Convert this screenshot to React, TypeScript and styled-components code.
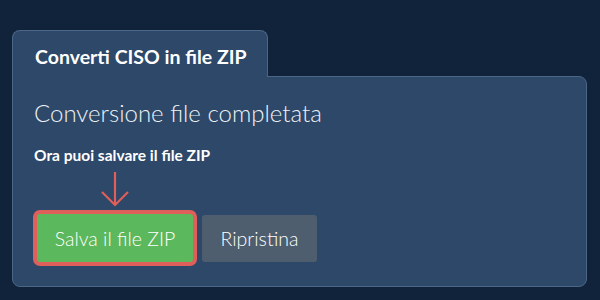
import styled, { createGlobalStyle } from "styled-components";

const GlobalStyle = createGlobalStyle`
  html, body {
    margin: 0;
    padding: 0;
    background: #11233a;
  }
  body {
    font-family: Lato, "Noto Sans", sans-serif;
    color: #ffffff;
  }
  * {
    box-sizing: border-box;
  }
`;

const Page = styled.div`
  width: 600px;
  height: 300px;
  padding: 30px 13px 0 12px;
  overflow: hidden;
`;

const Tabs = styled.div`
  display: flex;
`;

const Tab = styled.div`
  width: 256px;
  height: 47px;
  margin-bottom: -1px;
  padding: 14px 0 0 22px;
  background: #2d4868;
  border: 1px solid #4c6686;
  border-bottom: none;
  border-radius: 8px 8px 0 0;
  font-size: 19.5px;
  font-weight: 700;
  position: relative;
  z-index: 1;
`;

const Panel = styled.div`
  height: 211px;
  padding: 20px 21px 0 21px;
  background: #2d4868;
  border: 1px solid #4c6686;
  border-radius: 0 8px 8px 8px;
`;

const Heading = styled.h2`
  margin: 0;
  font-size: 24px;
  font-weight: 300;
  line-height: 32px;
  color: #eef2f6;
`;

const Hint = styled.p`
  margin: 16px 0 0 0;
  font-size: 15.5px;
  font-weight: 700;
  line-height: 20px;
`;

const Actions = styled.div`
  display: flex;
  align-items: flex-end;
  gap: 9px;
  padding-left: 3px;
`;

const Primary = styled.div`
  display: flex;
  flex-direction: column;
  align-items: center;
`;

const Arrow = styled.svg`
  display: block;
  margin: 6px 0 7px 0;
`;

const Button = styled.button<{ $variant: "save" | "reset" }>`
  font-family: inherit;
  font-size: 19.5px;
  font-weight: 300;
  color: #ffffff;
  border: none;
  border-radius: 3px;
  cursor: pointer;
  background: ${(p) => (p.$variant === "save" ? "#5cb85c" : "#4e5e6e")};
  width: ${(p) => (p.$variant === "save" ? "156px" : "115px")};
  height: ${(p) => (p.$variant === "save" ? "48px" : "47px")};
  box-shadow: ${(p) => (p.$variant === "save" ? "0 0 0 4px #df5f5a" : "none")};
  padding: 0;
`;

export default function App() {
  return (
    <>
      <GlobalStyle />
      <Page>
        <Tabs>
          <Tab>Converti CISO in file ZIP</Tab>
        </Tabs>
        <Panel>
          <Heading>Conversione file completata</Heading>
          <Hint>Ora puoi salvare il file ZIP</Hint>
          <Actions>
            <Primary>
              <Arrow width="30" height="36" viewBox="0 0 30 36">
                <path
                  d="M15 1 V34 M2 21 L15 34 L28 21"
                  fill="none"
                  stroke="#df5f5a"
                  strokeWidth="2.2"
                />
              </Arrow>
              <Button $variant="save">Salva il file ZIP</Button>
            </Primary>
            <Button $variant="reset">Ripristina</Button>
          </Actions>
        </Panel>
      </Page>
    </>
  );
}
